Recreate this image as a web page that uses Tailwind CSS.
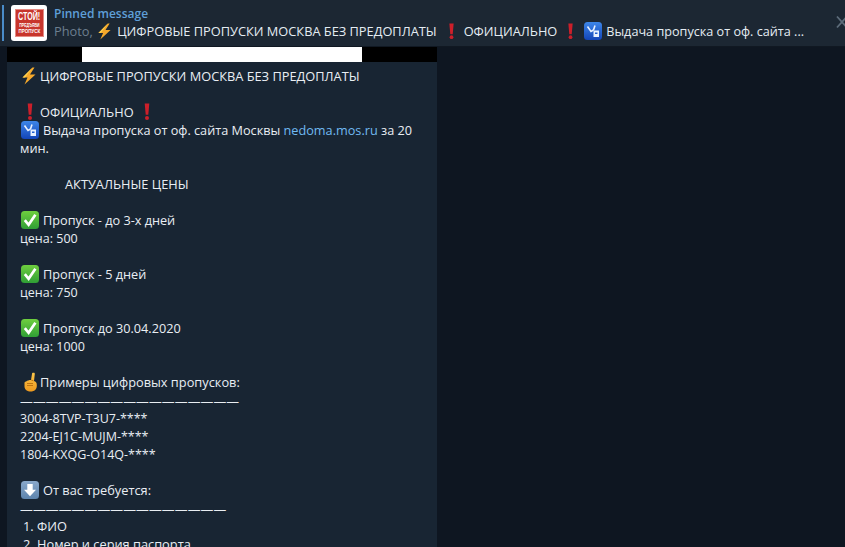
<!DOCTYPE html>
<html lang="ru"><head><meta charset="utf-8">
<script src="https://cdn.jsdelivr.net/npm/@tailwindcss/browser@4"></script>
</head>
<body class="m-0 bg-[#0e1621] font-['Open_Sans',sans-serif]">
<svg width="0" height="0" class="absolute">
<defs>
<linearGradient id="gb" x1="0" y1="0" x2="0" y2="1"><stop offset="0" stop-color="#3d86e8"/><stop offset="1" stop-color="#1345b8"/></linearGradient>
<linearGradient id="gg" x1="0" y1="0" x2="0" y2="1"><stop offset="0" stop-color="#6fcf3f"/><stop offset="1" stop-color="#2f9e35"/></linearGradient>
<linearGradient id="gd" x1="0" y1="0" x2="0" y2="1"><stop offset="0" stop-color="#8aa9cb"/><stop offset="1" stop-color="#5d84ad"/></linearGradient>
<linearGradient id="gh" x1="0" y1="0" x2="0" y2="1"><stop offset="0" stop-color="#fbc64a"/><stop offset="1" stop-color="#ee9a1f"/></linearGradient>
<symbol id="bolt" viewBox="0 0 16 18"><path d="M11.500 .5 1.500 10.500h5L3.500 17.500l11-10H9L13.500 .5z" fill="#f6a92b"/><path d="M11.500 .5 1.500 10.500h2.500L11.500 .5z" fill="#fcd24f"/></symbol>
<symbol id="excl" viewBox="0 0 16 18"><path d="M5.700 .5h4.600L9.300 11.800H6.700z" fill="#cc1f2a"/><circle cx="8" cy="15" r="2" fill="#cc1f2a"/></symbol>
<symbol id="blue" viewBox="0 0 18 18"><rect width="18" height="18" rx="3.500" fill="url(#gb)"/><path d="M3.500 4.500 7 9.500l2.500-1.500M11 3.500 9.500 8" stroke="#e8f1ff" stroke-width="1.600" fill="none"/><rect x="9.500" y="8.500" width="5.500" height="6.500" fill="#e8f1ff"/><rect x="11" y="10.500" width="2.500" height="1.500" fill="#1f5fd0"/></symbol>
<symbol id="check" viewBox="0 0 18 18"><rect width="18" height="18" rx="3.500" fill="url(#gg)"/><path d="M3.800 9.200 7.600 13.800 14.400 3.800" stroke="#fff" stroke-width="2.700" fill="none"/></symbol>
<symbol id="hand" viewBox="0 0 15 20"><path d="M10.200 .8c.9-.4 1.700.1 1.600 1.100L11 9c1.600.5 2.800 1.700 2.800 3.700v1.300c0 3.400-2.500 5.500-6 5.500S1.500 17.500 1.500 14.500v-3.200c0-1 .6-1.700 1.500-1.800.7-.1 1.300-.4 1.800-.9.600-.6 2.200-.8 3.200-.7l1-6c.1-.6.300-1 .7-1.100z" fill="url(#gh)"/><path d="M4 11.500h6M4 13.500h6M8.200 8l2.300 .8" stroke="#b86e10" stroke-width=".9" fill="none"/></symbol>
<symbol id="down" viewBox="0 0 18 18"><rect width="18" height="18" rx="3.500" fill="url(#gd)"/><path d="M6.300 3h5.400v5.800h3.300L9 15.300 3 8.800h3.300z" fill="#fff"/></symbol>
</defs>
</svg>
<div class="w-[845px] h-[547px] overflow-hidden flex flex-col">
  <header class="h-[47px] shrink-0 bg-[#1c2733] border-b border-[#101822] flex items-center pl-[2px] relative">
    <div class="w-[2px] h-[36px] bg-[#4a8cc9] mr-[7px] mb-[1px]"></div>
    <div class="w-[36px] h-[36px] rounded-[3px] bg-white flex items-center justify-center mr-[7px] mb-[1px]">
      <div class="w-[29px] h-[28px] bg-[#c8352c] border border-[#e58b84] flex flex-col items-center justify-center font-['Liberation_Sans',sans-serif] text-white font-bold leading-none overflow-hidden">
        <span class="text-[11px] leading-[11px] scale-x-[.65] whitespace-nowrap">СТОЙ!</span>
        <span class="text-[5px] leading-[5px] scale-x-[.7] mt-[1px] whitespace-nowrap">ПРЕДЪЯВИ</span>
        <span class="text-[6px] leading-[6px] scale-x-[.75] whitespace-nowrap">ПРОПУСК</span>
      </div>
    </div>
    <div class="flex flex-col mb-[1px]">
      <div class="text-[12px] leading-[18px] font-semibold text-[#5f9fd8] h-[17px]">Pinned message</div>
      <div class="text-[12.800px] leading-[18px] text-[#e4ecf2] flex items-center whitespace-pre">
        <span class="text-[#6d7f8f]">Photo, </span><svg class="w-[15px] h-[17px] ml-[1px] mr-[5px]"><use href="#bolt"/></svg><span>ЦИФРОВЫЕ ПРОПУСКИ МОСКВА БЕЗ ПРЕДОПЛАТЫ  </span><svg class="w-[15px] h-[17px] mx-[1px]"><use href="#excl"/></svg><span> ОФИЦИАЛЬНО </span><svg class="w-[15px] h-[17px] ml-[2px] mr-[1px]"><use href="#excl"/></svg><span> </span><svg class="w-[18px] h-[18px] ml-[2px] mr-[1px]"><use href="#blue"/></svg><span class="text-[12.650px]"> Выдача пропуска от оф. сайта ...</span>
      </div>
    </div>
    <svg class="absolute left-[836px] top-[15px] w-[12px] h-[14px]" viewBox="0 0 12 14"><path d="M1 1.500 11 12.500M11 1.500 1 12.500" stroke="#5d6c7a" stroke-width="1.800" fill="none"/></svg>
  </header>
  <main class="flex-1 overflow-hidden pl-[7px]">
    <article class="w-[430px] bg-[#182533]">
      <div class="h-[15px] bg-black flex justify-center"><div class="w-[280px] h-full bg-white"></div></div>
      <div class="pl-[13px] pt-[5px] text-[12.800px] leading-[18px] text-[#e9eef3] pr-[16px]">
        <div class="h-[18px] flex items-center"><svg class="w-[16px] h-[18px] mr-[3px] ml-[1px]"><use href="#bolt"/></svg>ЦИФРОВЫЕ ПРОПУСКИ МОСКВА БЕЗ ПРЕДОПЛАТЫ</div>
        <div class="h-[18px]"></div>
        <div class="h-[18px] flex items-center pl-[2px]"><svg class="w-[16px] h-[18px] mr-[2px]"><use href="#excl"/></svg>ОФИЦИАЛЬНО<svg class="w-[16px] h-[18px] ml-[5px]"><use href="#excl"/></svg></div>
        <div class="h-[18px] flex items-center whitespace-pre text-[12.700px]"><svg class="w-[18px] h-[18px] ml-[1px] mr-[4px]"><use href="#blue"/></svg>Выдача пропуска от оф. сайта Москвы <span class="text-[#71baf2]">nedoma.mos.ru</span> за 20</div>
        <div class="h-[18px]">мин.</div>
        <div class="h-[18px]"></div>
        <div class="h-[18px] pl-[45px]">АКТУАЛЬНЫЕ ЦЕНЫ</div>
        <div class="h-[18px]"></div>
        <div class="h-[18px] flex items-center text-[12.700px]"><svg class="w-[18px] h-[18px] ml-[1px] mr-[4px]"><use href="#check"/></svg>Пропуск - до 3-х дней</div>
        <div class="h-[18px] text-[12.500px] leading-[20px]">цена: 500</div>
        <div class="h-[18px]"></div>
        <div class="h-[18px] flex items-center text-[12.700px]"><svg class="w-[18px] h-[18px] ml-[1px] mr-[4px]"><use href="#check"/></svg>Пропуск - 5 дней</div>
        <div class="h-[18px] text-[12.500px] leading-[20px]">цена: 750</div>
        <div class="h-[18px]"></div>
        <div class="h-[18px] flex items-center text-[12.700px]"><svg class="w-[18px] h-[18px] ml-[1px] mr-[4px]"><use href="#check"/></svg>Пропуск до 30.04.2020</div>
        <div class="h-[18px] text-[12.500px] leading-[20px]">цена: 1000</div>
        <div class="h-[18px]"></div>
        <div class="h-[18px] flex items-center"><svg class="w-[15px] h-[20px] ml-[3px] mr-[2px] shrink-0"><use href="#hand"/></svg>Примеры цифровых пропусков:</div>
        <div class="h-[18px] whitespace-nowrap tracking-[.1px] leading-[20px]">—————————————————</div>
        <div class="h-[18px] text-[12.500px] leading-[20px]">3004-8TVP-T3U7-****</div>
        <div class="h-[18px] text-[12.500px] leading-[20px]">2204-EJ1C-MUJM-****</div>
        <div class="h-[18px] text-[12.500px] leading-[20px]">1804-KXQG-O14Q-****</div>
        <div class="h-[18px]"></div>
        <div class="h-[18px] flex items-center"><svg class="w-[18px] h-[18px] ml-[1px] mr-[4px]"><use href="#down"/></svg>От вас требуется:</div>
        <div class="h-[18px] whitespace-nowrap tracking-[.1px] leading-[20px]">————————————————</div>
        <div class="h-[18px] pl-[3px]">1. ФИО</div>
        <div class="h-[18px] pl-[3px]">2. Номер и серия паспорта</div>
      </div>
    </article>
  </main>
</div>
</body></html>
